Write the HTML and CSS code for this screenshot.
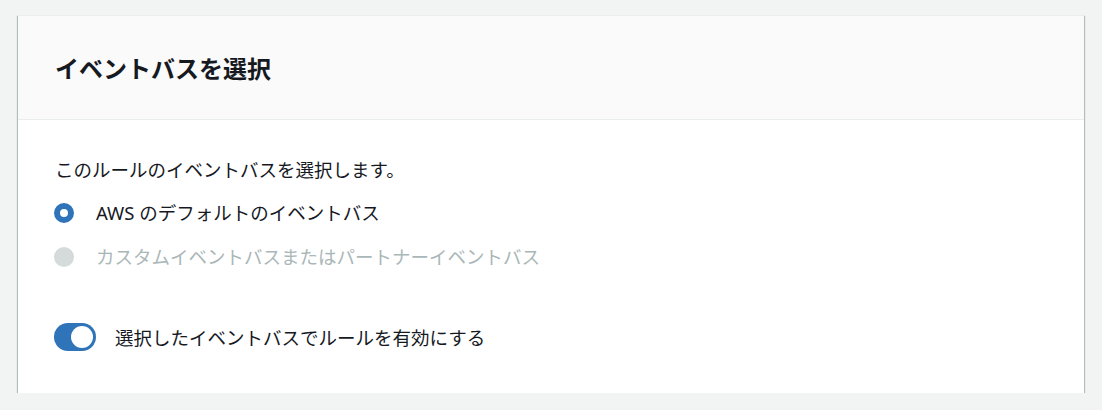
FILE: index.html
```html
<!DOCTYPE html>
<html lang="ja">
<head>
<meta charset="utf-8">
<link rel="stylesheet" href="styles.css">
</head>
<body>
<div class="card">
  <div class="card-header">
    <h2 class="title">イベントバスを選択</h2>
  </div>
  <div class="card-body">
    <p class="desc">このルールのイベントバスを選択します。</p>
    <div class="radio-row first">
      <span class="radio checked"></span>
      <span class="label">AWS のデフォルトのイベントバス</span>
    </div>
    <div class="radio-row second">
      <span class="radio disabled"></span>
      <span class="label disabled-text">カスタムイベントバスまたはパートナーイベントバス</span>
    </div>
    <div class="toggle-row">
      <span class="toggle"><span class="knob"></span></span>
      <span class="label">選択したイベントバスでルールを有効にする</span>
    </div>
  </div>
</div>
</body>
</html>
```
FILE: styles.css
```css
html, body {
  margin: 0;
  padding: 0;
}
body {
  background: #f2f3f3;
  padding: 15px 18px 0 18px;
  font-family: "Noto Sans", "Noto Sans CJK JP", sans-serif;
  color: #16191f;
}
.card {
  background: #ffffff;
  border-top: 1px solid #eaeded;
  box-shadow: 0 1px 1px 0 rgba(0, 28, 36, 0.4), 1px 1px 1px 0 rgba(0, 28, 36, 0.2), -1px 1px 1px 0 rgba(0, 28, 36, 0.2);
}
.card-header {
  background: #fafafa;
  height: 104px;
  box-sizing: border-box;
  padding: 2px 37px 0 37px;
  border-bottom: 1px solid #eaeded;
  display: flex;
  align-items: center;
}
.title {
  margin: 0;
  font-size: 24px;
  font-weight: 700;
  line-height: 32px;
  color: #16191f;
}
.card-body {
  padding: 36px 37px 42px 37px;
  display: flex;
  flex-direction: column;
  font-size: 18.5px;
  line-height: 27px;
}
.desc {
  margin: 0;
}
.radio-row, .toggle-row {
  display: flex;
  align-items: center;
  height: 27px;
}
.radio-row.first {
  margin-top: 16px;
}
.radio-row.second {
  margin-top: 17px;
}
.radio {
  width: 20px;
  height: 20px;
  border-radius: 50%;
  box-sizing: border-box;
  margin-left: -1px;
  margin-right: 22px;
  flex: none;
}
.radio.checked {
  border: 6px solid #2f73b8;
  background: #ffffff;
}
.radio.disabled {
  background: #d5dbdb;
}
.disabled-text {
  color: #aab7b8;
}
.toggle-row {
  margin-top: 53px;
  height: 28px;
}
.toggle {
  width: 42px;
  height: 28px;
  border-radius: 14px;
  background: #2f73b8;
  margin-left: -1px;
  margin-right: 19px;
  display: flex;
  align-items: center;
  justify-content: flex-end;
  padding: 0 3px;
  box-sizing: border-box;
  flex: none;
}
.knob {
  width: 22px;
  height: 22px;
  border-radius: 50%;
  background: #ffffff;
}
```
